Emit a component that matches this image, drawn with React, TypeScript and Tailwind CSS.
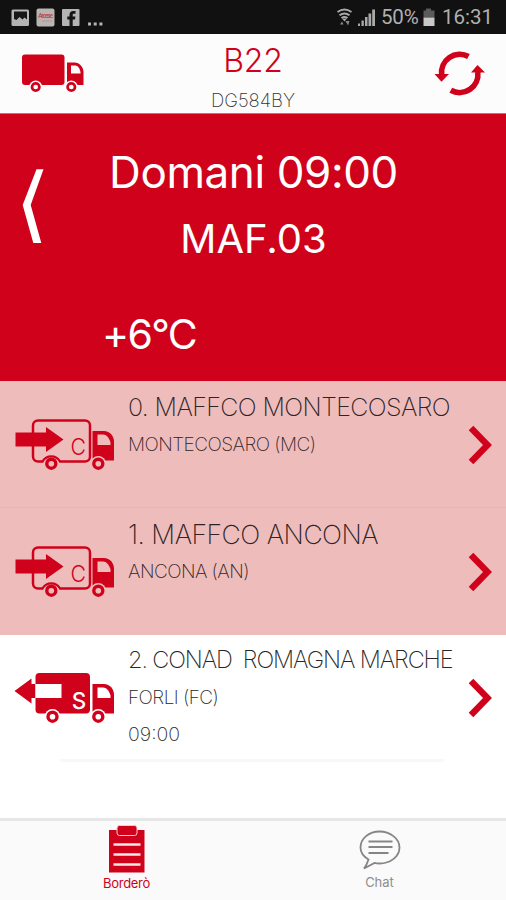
import type { ReactNode } from 'react'

type Stop = {
  title: string
  titleClass: string
  place: string
  time?: string
  kind: 'carico' | 'scarico'
}

// il titolo si restringe per i nomi più lunghi
const stops: Stop[] = [
  {
    title: '0. MAFFCO MONTECOSARO',
    titleClass: 'text-[25px] leading-[37px] font-extralight tracking-[-0.6px]',
    place: 'MONTECOSARO (MC)',
    kind: 'carico',
  },
  {
    title: '1. MAFFCO ANCONA',
    titleClass: 'text-[26.5px] leading-[37px] font-extralight tracking-[-0.5px]',
    place: 'ANCONA (AN)',
    kind: 'carico',
  },
  {
    title: '2. CONAD  ROMAGNA MARCHE',
    titleClass: 'text-[23.5px] leading-[38px] font-extralight tracking-[-1.1px]',
    place: 'FORLI (FC)',
    time: '09:00',
    kind: 'scarico',
  },
]

function StatusBar() {
  return (
    <div className="flex h-[34px] items-center bg-[#111111] font-[Roboto,sans-serif] text-[#b0b0b0]">
      <svg className="ml-[11px] h-[34px] w-[93px]" viewBox="11 0 93 34">
        <rect x="11.5" y="9.5" width="17.5" height="16.5" rx="1.5" fill="#b4b4b4" />
        <path d="M14 11.500h13v8l-2.500-2-2 2-3-2.500-3 3-2.500-1z" fill="#161616" />
        <rect x="36.5" y="8.5" width="18" height="18" rx="2" fill="#b9b4b3" />
        <text x="38" y="18" fontSize="7" fontWeight="700" fill="#b8545a" textLength="15">Arcese</text>
        <path d="M42 21h10" stroke="#c58d90" strokeWidth="1" />
        <rect x="62" y="9" width="17.5" height="17" rx="1" fill="#b4b4b4" />
        <path d="M69.500 26v-6.500h-2.200v-3h2.200v-1.700c0-2.500 1.400-3.900 3.800-3.900h2.200v2.900h-1.500c-1.100 0-1.300.5-1.300 1.300v1.400h2.700l-.4 3h-2.300V26z" fill="#161616" />
        <g fill="#b4b4b4">
          <rect x="88" y="22.5" width="3" height="3" />
          <rect x="93.7" y="22.5" width="3" height="3" />
          <rect x="99.4" y="22.5" width="3" height="3" />
        </g>
      </svg>
      <svg className="ml-auto h-[34px] w-[42px]" viewBox="334 0 42 34">
        <g fill="none" stroke="#a9a9a9" strokeWidth="2">
          <path d="M336.500 12q7-5 14 0" />
          <path d="M338.500 15.200q5-3.500 10 0" />
          <path d="M340.500 18q3-2 6 0" />
        </g>
        <path d="M341 18.500h5l-2.500 3z" fill="#a9a9a9" />
        <path d="M339 24.500l2-3 1.500 3zM344.500 21h4l-1.500 4.500z" fill="#8a8a8a" />
        <g fill="#a9a9a9">
          <rect x="357" y="23.5" width="2" height="2.5" />
          <rect x="360.5" y="20.5" width="2.3" height="5.5" />
          <rect x="364" y="17" width="2.5" height="9" />
          <rect x="367.5" y="13.5" width="2.7" height="12.5" />
          <rect x="371.2" y="9.5" width="2.8" height="16.5" />
        </g>
      </svg>
      <span className="ml-[4px] w-[41px] text-[20.5px] leading-[34px] tracking-[-0.2px]">50%</span>
      <svg className="h-[34px] w-[14px]" viewBox="422 0 14 34">
        <path d="M426 8.500h5v2h3.500v7h-11v-7h2.500z" fill="#5b5b5b" />
        <path d="M423.500 17.500h11v8.500h-11z" fill="#c8c8c8" />
      </svg>
      <span className="ml-[6px] w-[64px] text-[20.5px] leading-[34px]">16:31</span>
    </div>
  )
}

function HeaderTruck() {
  return (
    <svg className="h-[40px] w-[64px]" viewBox="21 53 64 40">
      <rect x="22" y="54.5" width="42.5" height="30.5" rx="3" fill="#d0021b" />
      <path d="M67 62.500h7.500c5 0 9 4.500 9 10V85H67z" fill="#d0021b" />
      <path d="M71 65.500h4c2.500 0 4.500 2 5.500 6.500v1.500H71z" fill="#fcfcfc" />
      <g fill="#fcfcfc">
        <circle cx="35.7" cy="87" r="6.5" />
        <circle cx="71.3" cy="87" r="6.5" />
      </g>
      <g fill="#fcfcfc" stroke="#d0021b" strokeWidth="2.7">
        <circle cx="35.7" cy="87" r="3.7" />
        <circle cx="71.3" cy="87" r="3.7" />
      </g>
    </svg>
  )
}

function RefreshIcon() {
  return (
    <svg className="h-[46px] w-[52px]" viewBox="434 51 52 46">
      <g fill="none" stroke="#d0021b" strokeWidth="5.6">
        <path d="M468.500 56.500A18.300 18.300 0 0 0 441.700 75" />
        <path d="M450.800 90.300A18.300 18.300 0 0 0 477.800 72" />
      </g>
      <path d="M434.500 74h14.500l-7.500 7.800z" fill="#d0021b" />
      <path d="M471 72.500h14l-7.500-7.500z" fill="#d0021b" />
    </svg>
  )
}

// cabina e ruote comuni ai due camion dell'elenco
function TruckCab({ bg }: { bg: string }) {
  return (
    <>
      <path d="M80.500 17h11.500c6 0 10 5 10 11v18.500H80.500z" fill="#d0021b" />
      <path d="M85.500 20.500h5.500c3.500 0 6 3 7.500 8v2.500H85.500z" fill={bg} />
      <circle cx="86.3" cy="49.7" r="7.8" fill={bg} />
      <circle cx="86.3" cy="49.7" r="4.5" fill={bg} stroke="#d0021b" strokeWidth="3.4" />
    </>
  )
}

function LoadTruck() {
  return (
    <svg className="h-[60px] w-[106px]" viewBox="0 0 106 60">
      <rect x="21" y="6.5" width="57" height="41" rx="5" fill="none" stroke="#d0021b" strokeWidth="2.5" />
      <path d="M3.500 18.500H34V13l17.500 12.500L34 38v-5.500H3.500z" fill="#d0021b" />
      <text x="58.5" y="41" fontSize="22.5" fontFamily="Inter, sans-serif" fontWeight="300" fill="#d0021b" textLength="15.5" lengthAdjust="spacingAndGlyphs">C</text>
      <circle cx="39.3" cy="49.7" r="8" fill="#efbcbc" />
      <path d="M30.500 47.500a10 10 0 0 1 17.500 0" fill="none" stroke="#d0021b" strokeWidth="2.2" />
      <circle cx="39.3" cy="49.7" r="4.5" fill="#efbcbc" stroke="#d0021b" strokeWidth="3.4" />
      <TruckCab bg="#efbcbc" />
    </svg>
  )
}

function UnloadTruck() {
  return (
    <svg className="h-[60px] w-[106px]" viewBox="0 0 106 60">
      <rect x="23.5" y="6" width="54.5" height="40.5" rx="4" fill="#d0021b" />
      <path d="M23.500 17h26v14h-26z" fill="#fff" />
      <path d="M2.500 24L19.500 11.500V17H23v14h-3.500v5.500z" fill="#d0021b" />
      <text x="59.7" y="42" fontSize="23.5" fontFamily="Inter, sans-serif" fontWeight="500" fill="#fff" textLength="14.5" lengthAdjust="spacingAndGlyphs">S</text>
      <circle cx="40.5" cy="49.7" r="7.8" fill="#fff" />
      <circle cx="40.5" cy="49.7" r="4.5" fill="#fff" stroke="#d0021b" strokeWidth="3.4" />
      <TruckCab bg="#fff" />
    </svg>
  )
}

function StopRow({ stop }: { stop: Stop }) {
  const load = stop.kind === 'carico'
  return (
    <div
      className={
        load
          ? 'flex h-[127px] items-start bg-[#efbcbc] pl-[12px] text-[#2e2424]'
          : 'flex h-[126px] items-start bg-white pl-[12px] text-[#262626]'
      }
    >
      <div className={load ? 'mt-[33px] w-[116px]' : 'mt-[32px] w-[116px]'}>
        {load ? <LoadTruck /> : <UnloadTruck />}
      </div>
      <div className={load ? 'w-[340px] pt-[8px] whitespace-pre' : 'w-[340px] pt-[6px] whitespace-pre'}>
        <div className={stop.titleClass}>{stop.title}</div>
        <div className="text-[19px] leading-[37px] font-extralight tracking-[-0.55px]">{stop.place}</div>
        {stop.time && <div className="text-[19.5px] leading-[37px] font-extralight">{stop.time}</div>}
      </div>
      <svg className={load ? 'mt-[44px] h-[40px] w-[26px]' : 'mt-[43px] h-[40px] w-[26px]'} viewBox="0 0 26 40">
        <path d="M3 3l16.500 17L3 37" fill="none" stroke="#d0021b" strokeWidth="6.4" />
      </svg>
    </div>
  )
}

function Tab({ label, className, children }: { label: string; className: string; children: ReactNode }) {
  return (
    <div className={className}>
      {children}
      <span className="text-[13px] leading-[16px]">{label}</span>
    </div>
  )
}

export default function App() {
  return (
    <div className="flex h-[900px] w-[506px] flex-col overflow-hidden bg-white font-[Inter,sans-serif]">
      <StatusBar />

      <header className="flex h-[80px] items-start justify-between border-b border-[#e8606c] bg-[#fcfcfc] px-[21px]">
        <div className="mt-[19px] w-[64px]">
          <HeaderTruck />
        </div>
        <div className="flex flex-col items-center pt-[6px]">
          <span className="text-[32px] leading-[41px] font-light tracking-[-0.2px] text-[#d0021b]">B22</span>
          <span className="mt-[9px] text-[18.5px] leading-[20px] font-extralight text-[#333333]">DG584BY</span>
        </div>
        <div className="mt-[17px] w-[64px] pl-[13px]">
          <RefreshIcon />
        </div>
      </header>

      <section className="flex h-[267px] bg-[#d0021b] text-white">
        <svg className="mt-[54px] ml-[22px] h-[76px] w-[23px] shrink-0" viewBox="22 168 23 76">
          <path d="M36.500 169.300h7L30.700 205l10.600 38h-8l-10.600-38z" fill="#fff" />
        </svg>
        <div className="flex w-[417px] flex-col pt-[28px]">
          <div className="text-center text-[44px] leading-[60px] tracking-[-0.4px]">Domani 09:00</div>
          <div className="mt-[7px] text-center text-[40px] leading-[60px]">MAF.03</div>
          <div className="mt-[35px] pl-[57px] text-[41px] leading-[60px] tracking-[-1.7px]">+6°C</div>
        </div>
      </section>

      <main className="flex-1">
        <StopRow stop={stops[0]} />
        <div className="mt-[-1px] h-px bg-[#e9b5b5]" />
        <StopRow stop={stops[1]} />
        <StopRow stop={stops[2]} />
        <div className="mt-[-2px] mr-[62px] ml-[60px] h-[3px] bg-[#f8f8f8]" />
      </main>

      <nav className="flex h-[82px] border-t-[3px] border-[#e6e6e6] bg-[#fafafa]">
        <Tab label="Borderò" className="flex w-[253px] flex-col items-center pt-[3px] tracking-[-0.3px] text-[#d0021b]">
          <svg className="mb-px h-[50px] w-[38px]" viewBox="108 824 38 50">
            <path d="M109 830h35.500v42.500H109z" fill="#d0021b" />
            <rect x="117" y="825.5" width="20" height="10" rx="2.5" fill="#d0021b" stroke="#f7c9cd" strokeWidth="1" />
            <path d="M113.500 844.500h27M113.500 854.500h27M113.500 864.500h27" stroke="#fbe9ea" strokeWidth="2.5" />
          </svg>
        </Tab>
        <Tab label="Chat" className="flex w-[253px] flex-col items-center pt-[7px] text-[#8e8e8e]">
          <svg className="mb-px h-[45px] w-[44px]" viewBox="358 828 44 45">
            <path
              d="M368.500 859.500c-5-3-8-7-8-12 0-9 8.500-16 19-16s20 7 20 16-9 16-20 16c-2 0-3.500-.2-5-.6l-10.500 5.600q3-4 4.500-9z"
              fill="none"
              stroke="#858585"
              strokeWidth="1.8"
            />
            <path d="M368.500 841.500h24M368.500 847h24M368.500 853h20" stroke="#858585" strokeWidth="2" />
          </svg>
        </Tab>
      </nav>
    </div>
  )
}
